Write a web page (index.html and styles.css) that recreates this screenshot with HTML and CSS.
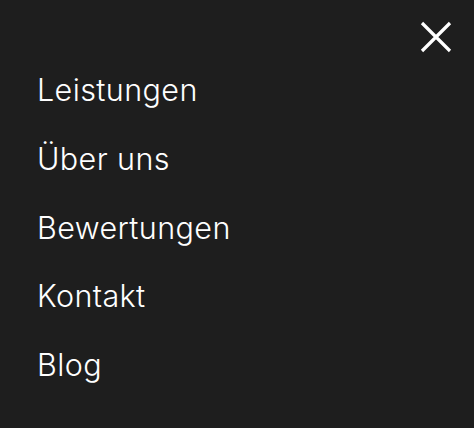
FILE: index.html
```html
<!DOCTYPE html>
<html lang="de">
<head>
    <meta charset="UTF-8">
    <meta name="viewport" content="width=device-width, initial-scale=1.0">
    <title>Menü</title>
    <link rel="stylesheet" href="styles.css">
</head>
<body>
    <nav class="mobile-menu">
        <div class="menu-top">
            <button class="close-button" aria-label="Menü schließen">
                <svg width="34" height="34" viewBox="0 0 34 34" fill="none" stroke="#fff" stroke-width="3.2" stroke-linecap="butt">
                    <path d="M3 3 L31 31 M31 3 L3 31"/>
                </svg>
            </button>
        </div>
        <ul class="menu-list">
            <li><a href="#">Leistungen</a></li>
            <li><a href="#">Über uns</a></li>
            <li><a href="#">Bewertungen</a></li>
            <li><a href="#">Kontakt</a></li>
            <li><a href="#">Blog</a></li>
        </ul>
    </nav>
</body>
</html>
```

FILE: styles.css
```css
* {
    margin: 0;
    padding: 0;
    box-sizing: border-box;
}

html, body {
    height: 100%;
}

body {
    background-color: #1e1e1e;
    color: #ffffff;
    font-family: Inter, "Noto Sans", sans-serif;
}

.mobile-menu {
    padding: 20px 21px 0 37px;
}

.menu-top {
    display: flex;
    justify-content: flex-end;
}

.close-button {
    background: none;
    border: none;
    cursor: pointer;
    width: 34px;
    height: 34px;
    display: flex;
}

.menu-list {
    list-style: none;
    margin-top: 2px;
}

.menu-list li {
    height: 68.75px;
    line-height: 68.75px;
}

.menu-list a {
    color: #ffffff;
    text-decoration: none;
    font-size: 30.5px;
    font-weight: 300;
    letter-spacing: 0.4px;
}
```
